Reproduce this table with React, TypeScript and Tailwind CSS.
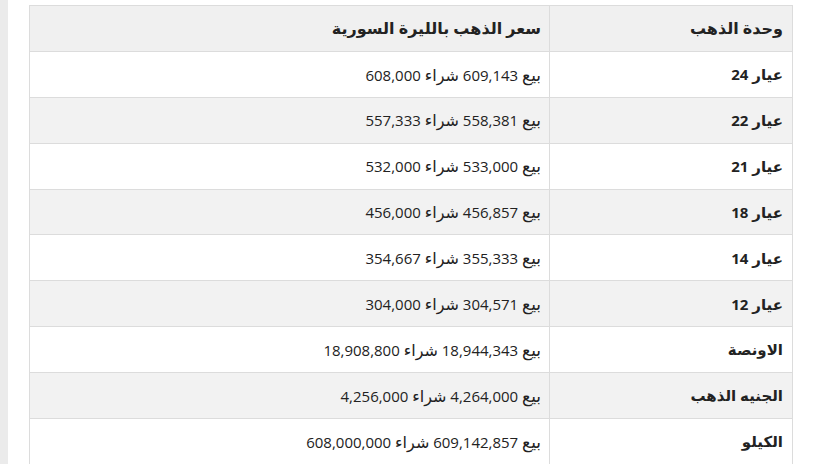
const rows: [string, string, string][] = [
  ["عيار 24", "609,143", "608,000"],
  ["عيار 22", "558,381", "557,333"],
  ["عيار 21", "533,000", "532,000"],
  ["عيار 18", "456,857", "456,000"],
  ["عيار 14", "355,333", "354,667"],
  ["عيار 12", "304,571", "304,000"],
  ["الاونصة", "18,944,343", "18,908,800"],
  ["الجنيه الذهب", "4,264,000", "4,256,000"],
  ["الكيلو", "609,142,857", "608,000,000"],
];

export default function App() {
  return (
    <div
      className="flex h-[464px] w-[813px] overflow-hidden bg-white text-[#222]"
      style={{ fontFamily: '"Open Sans", "Noto Sans", "DejaVu Sans", sans-serif' }}
    >
      {/* page gutter */}
      <div className="w-[8px] shrink-0 bg-[#ebebeb]" />
      <div className="w-[21px] shrink-0" />
      <div className="pt-[5px]">
        <table dir="rtl" className="w-[764px] border-collapse text-[15px]">
          <thead>
            <tr className="bg-[#f0f0f0]">
              <th className="h-[45.9px] w-[243px] border border-[#dcdcdc] px-[9px] text-right text-[16px] font-bold">
                وحدة الذهب
              </th>
              <th className="h-[45.9px] border border-[#dcdcdc] px-[8px] text-right text-[16px] font-bold">
                سعر الذهب بالليرة السورية
              </th>
            </tr>
          </thead>
          <tbody>
            {rows.map(([unit, sell, buy], i) => (
              <tr key={unit} className={i % 2 === 1 ? "bg-[#f2f2f2]" : "bg-white"}>
                <td className="h-[45.9px] border border-[#dcdcdc] px-[9px] text-right font-bold">{unit}</td>
                <td className="h-[45.9px] border border-[#dcdcdc] px-[8px] text-right">
                  <span className="text-[17px]">بيع</span> {sell} <span className="text-[16px]">شراء</span> {buy}
                </td>
              </tr>
            ))}
          </tbody>
        </table>
      </div>
    </div>
  );
}
